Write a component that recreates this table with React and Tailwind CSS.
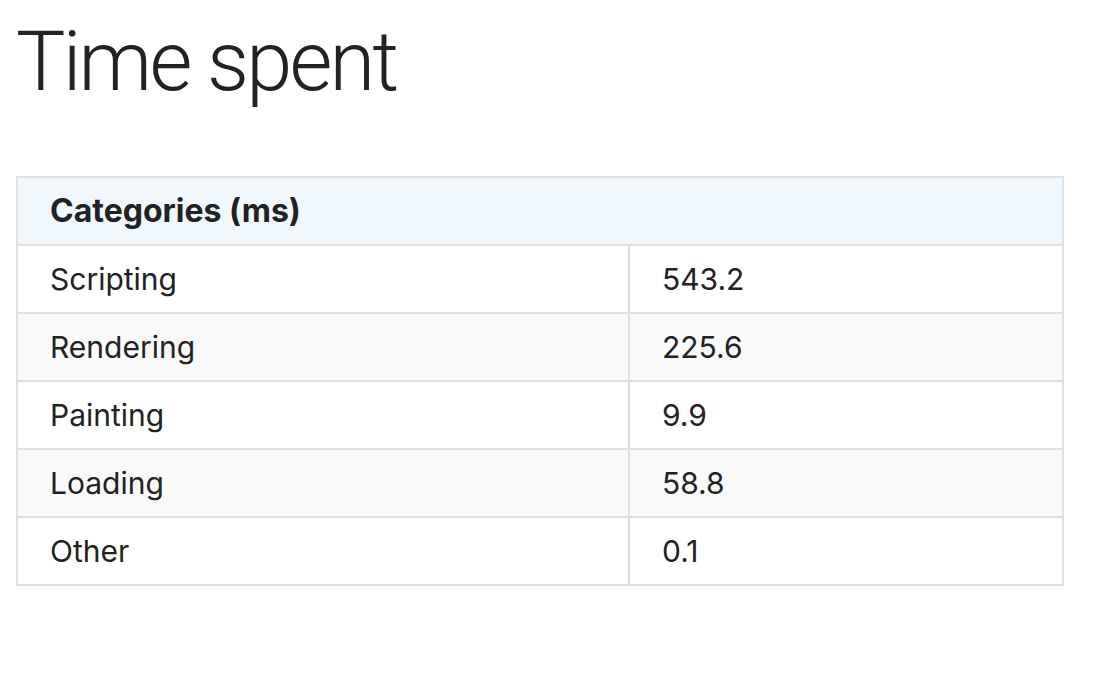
import React from 'react';

const rows = [
  ['Scripting', '543.2'],
  ['Rendering', '225.6'],
  ['Painting', '9.9'],
  ['Loading', '58.8'],
  ['Other', '0.1'],
];

export default function App() {
  return (
    <div className="min-h-screen bg-white px-4 text-[#222]" style={{ fontFamily: 'Inter, "Liberation Sans", sans-serif' }}>
      <h1 className="pt-[14px] text-[83px] font-light leading-[96px] tracking-[-2.8px]" style={{ fontFamily: 'Roboto, sans-serif' }}>Time spent</h1>
      <table className="mt-[66px] w-[1048px] border-collapse border-2 border-[#e0e0e0] text-[30px]">
        <thead>
          <tr className="bg-[#f0f8fe]">
            <th colSpan={2} className="h-[68px] border-2 border-[#e0e0e0] px-[32px] text-left text-[32px] font-bold">Categories (ms)</th>
          </tr>
        </thead>
        <tbody>
          {rows.map(([name, val], i) => (
            <tr key={name} className={i % 2 ? 'bg-[#f9f9f9]' : 'bg-white'}>
              <td className="h-[68px] w-[612px] border-2 border-[#e0e0e0] px-[32px]">{name}</td>
              <td className="h-[68px] border-2 border-[#e0e0e0] px-[32px]">{val}</td>
            </tr>
          ))}
        </tbody>
      </table>
    </div>
  );
}
